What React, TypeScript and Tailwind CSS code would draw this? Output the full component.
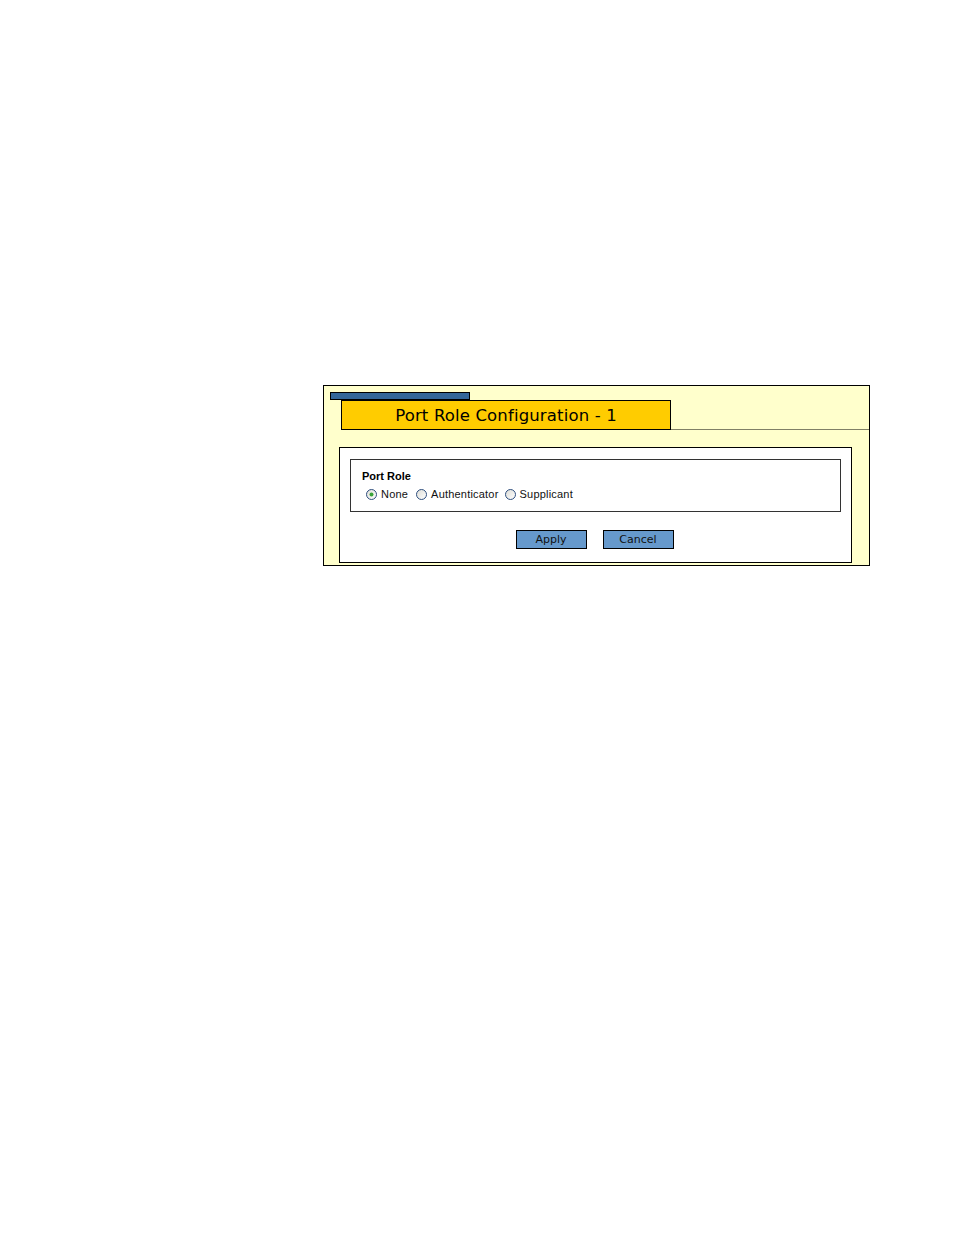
import React from "react";

function Radio({ checked }: { checked?: boolean }) {
  return (
    <svg width="11" height="11" viewBox="0 0 11 11" className="shrink-0">
      <defs>
        <linearGradient id={checked ? "rg1" : "rg0"} x1="0" y1="0" x2="1" y2="1">
          <stop offset="0" stopColor="#dcdcd6" />
          <stop offset="1" stopColor="#ffffff" />
        </linearGradient>
      </defs>
      <circle
        cx="5.5"
        cy="5.5"
        r="5"
        fill={`url(#${checked ? "rg1" : "rg0"})`}
        stroke="#2f4f7f"
        strokeWidth="1"
      />
      {checked && <circle cx="5.5" cy="5.5" r="2" fill="#3aa33a" />}
    </svg>
  );
}

const labelFont = { fontFamily: '"Liberation Sans", Arial, sans-serif' };
const verdana = { fontFamily: '"DejaVu Sans", Verdana, sans-serif' };

export default function App() {
  return (
    <div className="min-h-[1235px] w-[954px] bg-white pt-[385px] pl-[323px]">
      <div className="flex h-[181px] w-[547px] flex-col border border-black bg-[#ffffcc]">
        <div className="ml-[6px] mt-[6px] h-[8px] w-[140px] border border-black bg-[#336699]" />
        <div className="flex items-end">
          <div
            className="ml-[17px] flex h-[30px] w-[330px] items-start justify-center border border-black bg-[#ffcc00] pt-[1px] text-[16.5px] leading-[28px] tracking-[0.15px] text-black"
            style={verdana}
          >
            Port Role Configuration - 1
          </div>
          <div className="flex-1 border-b border-[#808066]" />
        </div>
        <div className="ml-[15px] mr-[17px] mt-[17px] flex h-[116px] flex-col border border-black bg-white">
          <div
            className="ml-[10px] mr-[10px] mt-[11px] h-[53px] border border-[#333333] pl-[11px] pt-[10px]"
            style={labelFont}
          >
            <div className="h-[13px] text-[11px] font-bold leading-[13px] text-black">
              Port Role
            </div>
            <div className="mt-[5px] flex h-[13px] items-center pl-[4px] text-[11px] leading-[13px] tracking-[0.2px] text-[#111]">
              <label className="flex items-center">
                <Radio checked />
                <span className="ml-[4px]">None</span>
              </label>
              <label className="ml-[8px] flex items-center">
                <Radio />
                <span className="ml-[4px]">Authenticator</span>
              </label>
              <label className="ml-[6px] flex items-center">
                <Radio />
                <span className="ml-[4px]">Supplicant</span>
              </label>
            </div>
          </div>
          <div className="mr-[2px] mt-[18px] flex justify-center gap-[16px]" style={verdana}>
            <button
              type="button"
              className="h-[19px] w-[71px] border border-black bg-[#6699cc] text-[11px] leading-[17px] text-[#111]"
            >
              Apply
            </button>
            <button
              type="button"
              className="h-[19px] w-[71px] border border-black bg-[#6699cc] text-[11px] leading-[17px] text-[#111]"
            >
              Cancel
            </button>
          </div>
        </div>
      </div>
    </div>
  );
}
